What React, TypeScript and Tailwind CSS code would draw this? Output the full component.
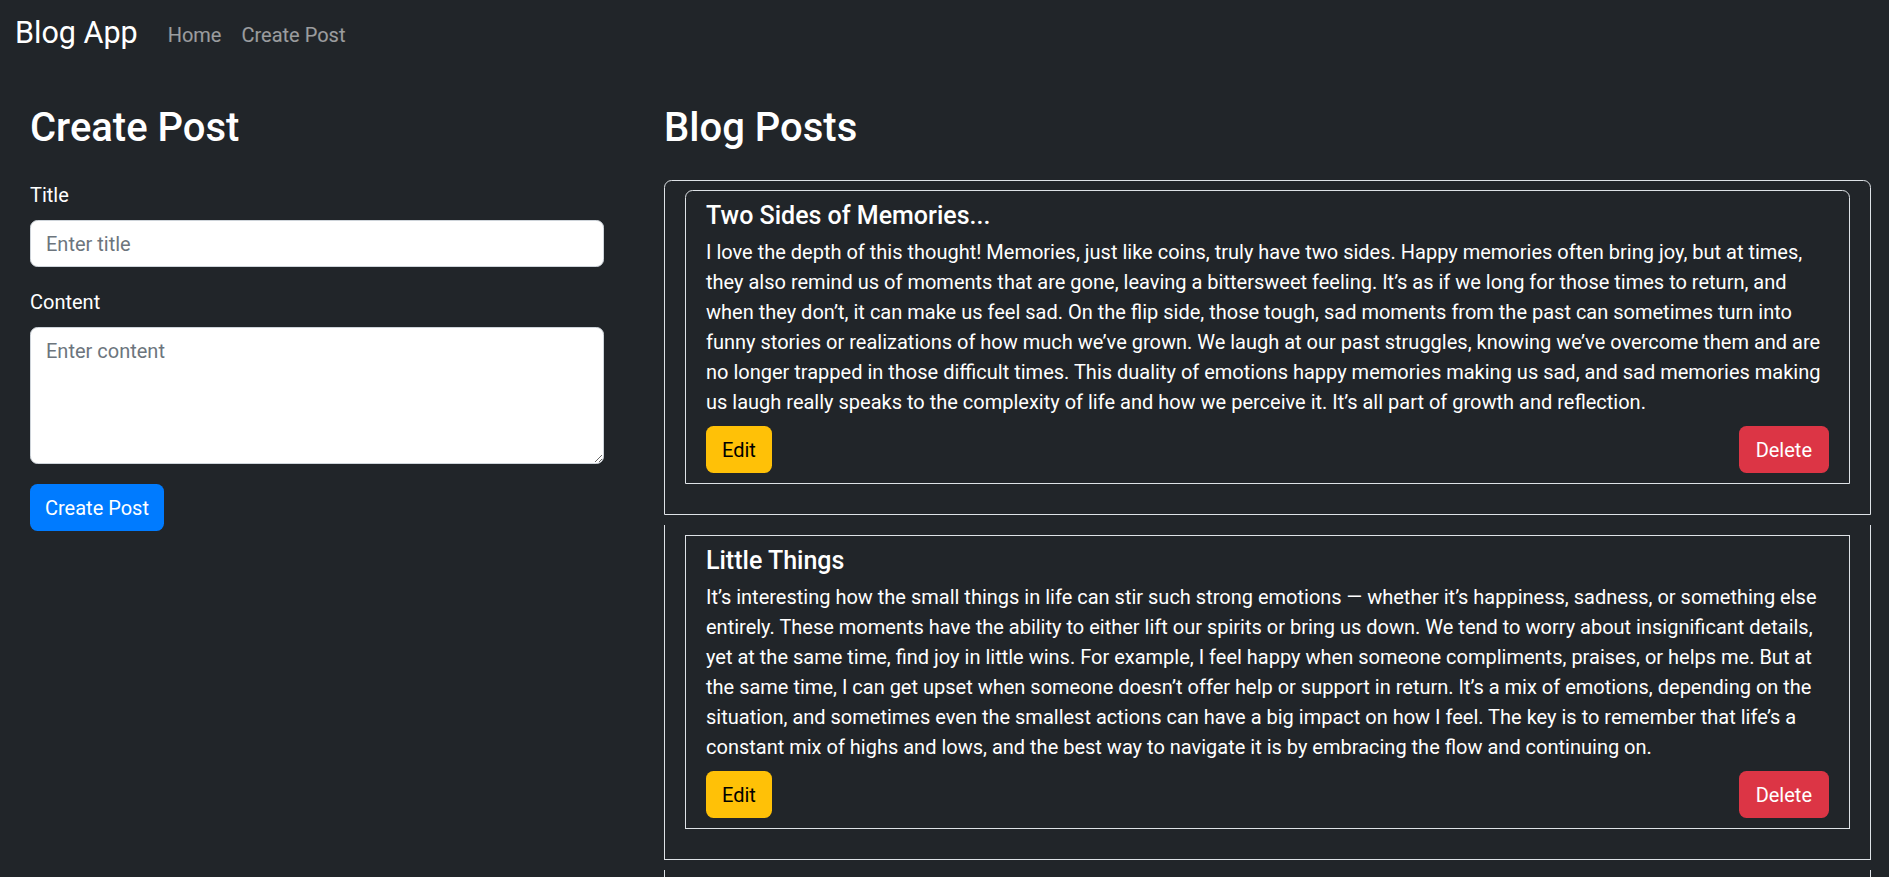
import React from "react";

type Post = { title: string; lines: string[] };

const posts: Post[] = [
  {
    title: "Two Sides of Memories...",
    lines: [
      "I love the depth of this thought! Memories, just like coins, truly have two sides. Happy memories often bring joy, but at times,",
      "they also remind us of moments that are gone, leaving a bittersweet feeling. It\u2019s as if we long for those times to return, and",
      "when they don\u2019t, it can make us feel sad. On the flip side, those tough, sad moments from the past can sometimes turn into",
      "funny stories or realizations of how much we\u2019ve grown. We laugh at our past struggles, knowing we\u2019ve overcome them and are",
      "no longer trapped in those difficult times. This duality of emotions happy memories making us sad, and sad memories making",
      "us laugh really speaks to the complexity of life and how we perceive it. It\u2019s all part of growth and reflection.",
    ],
  },
  {
    title: "Little Things",
    lines: [
      "It\u2019s interesting how the small things in life can stir such strong emotions \u2014 whether it\u2019s happiness, sadness, or something else",
      "entirely. These moments have the ability to either lift our spirits or bring us down. We tend to worry about insignificant details,",
      "yet at the same time, find joy in little wins. For example, I feel happy when someone compliments, praises, or helps me. But at",
      "the same time, I can get upset when someone doesn\u2019t offer help or support in return. It\u2019s a mix of emotions, depending on the",
      "situation, and sometimes even the smallest actions can have a big impact on how I feel. The key is to remember that life\u2019s a",
      "constant mix of highs and lows, and the best way to navigate it is by embracing the flow and continuing on.",
    ],
  },
];

function PostItem({ post, first }: { post: Post; first: boolean }) {
  return (
    <li
      className={
        first
          ? "border border-[#dee2e6] rounded-t-[7.5px] px-[20px] pt-[9px] pb-[30px] mb-[10px]"
          : "border border-t-0 border-[#dee2e6] px-[20px] pt-[10px] pb-[30px] mb-[10px]"
      }
    >
      <div
        className={
          first
            ? "border border-[#dee2e6] rounded-t-[7.5px] px-[20px] pt-[10px] pb-[10px]"
            : "border border-[#dee2e6] px-[20px] pt-[10px] pb-[10px]"
        }
      >
        <h5 className="text-[25px] leading-[30px] font-medium mb-[6px]">{post.title}</h5>
        <p className="text-[20px] leading-[30px] mb-[9px]">
          {post.lines.map((l, i) => (
            <span key={i} className="block whitespace-nowrap">
              {l}
            </span>
          ))}
        </p>
        <div className="flex justify-between">
          <button className="h-[47px] px-[16px] rounded-[7.5px] bg-[#ffc107] text-black text-[20px] leading-[30px]">
            Edit
          </button>
          <button className="h-[47px] px-[17px] rounded-[7.5px] bg-[#dc3545] text-white text-[20px] leading-[30px]">
            Delete
          </button>
        </div>
      </div>
    </li>
  );
}

export default function App() {
  return (
    <div className="min-h-screen bg-[#212529] text-white font-['Roboto',sans-serif]">
      <nav className="h-[70px] flex items-center px-[15px]">
        <a className="text-[30.5px] leading-[30px] mr-[20px] mb-[4px] text-white">Blog App</a>
        <a className="px-[10px] text-[20px] leading-[30px] text-white/55">Home</a>
        <a className="px-[10px] text-[20px] leading-[30px] text-white/55">Create Post</a>
      </nav>

      <main className="flex gap-[60px] pl-[30px] pr-[18px] pt-[34px]">
        <section className="w-[574px] shrink-0">
          <h2 className="text-[40px] leading-[48px] font-medium mb-[28px]">Create Post</h2>
          <form className="flex flex-col" onSubmit={(e) => e.preventDefault()}>
            <label className="text-[20px] leading-[30px] mb-[10px]">Title</label>
            <input
              placeholder="Enter title"
              className="h-[47px] mb-[20px] bg-white text-[#212529] border border-[#ced4da] rounded-[7.5px] px-[15px] text-[20px] leading-[30px] placeholder:text-[#6c757d] outline-none"
            />
            <label className="text-[20px] leading-[30px] mb-[10px]">Content</label>
            <textarea
              placeholder="Enter content"
              rows={4}
              className="h-[137px] mb-[20px] bg-white text-[#212529] border border-[#ced4da] rounded-[7.5px] px-[15px] py-[7.5px] text-[20px] leading-[30px] placeholder:text-[#6c757d] outline-none"
            />
            <div>
              <button className="h-[47px] px-[15px] rounded-[7.5px] bg-[#007bff] text-white text-[20px] leading-[30px]">
                Create Post
              </button>
            </div>
          </form>
        </section>

        <section className="flex-1 min-w-0">
          <h2 className="text-[40px] leading-[48px] font-medium mb-[28px]">Blog Posts</h2>
          <ul className="flex flex-col">
            {posts.map((p, i) => (
              <PostItem key={i} post={p} first={i === 0} />
            ))}
            <li className="border border-t-0 border-[#dee2e6] px-[20px] pt-[10px] pb-[30px]">
              <div className="border border-[#dee2e6] h-[293px]" />
            </li>
          </ul>
        </section>
      </main>
    </div>
  );
}
